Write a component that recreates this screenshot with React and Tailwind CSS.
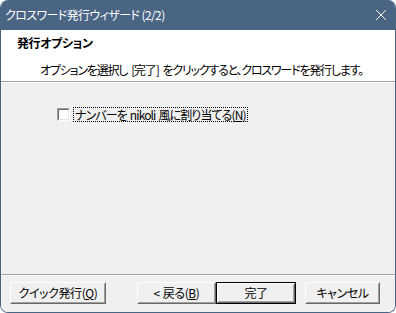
import React from 'react';

const FONT = { fontFamily: '"Noto Sans CJK JP", "Noto Sans", sans-serif' };

function Btn({ children, def, className = '' }) {
  // classic 3D push button; the default one gets a dark outline
  return (
    <div className={`h-[22px] ${def ? 'border border-[#000]' : ''} ${className}`}>
      <div className="h-full border border-t-white border-l-white border-r-[#696969] border-b-[#696969]">
        <div className="h-full border border-t-[#f0f0f0] border-l-[#f0f0f0] border-r-[#a0a0a0] border-b-[#a0a0a0] bg-[#f0f0f0] flex items-center justify-center text-[12px] leading-none text-black whitespace-nowrap">
          {children}
        </div>
      </div>
    </div>
  );
}

export default function App() {
  return (
    <div className="w-[396px] h-[313px] bg-white [font-feature-settings:'palt'] tracking-[-0.4px]" style={FONT}>
      <div className="w-full h-full flex flex-col rounded-t-[8px] rounded-b-[8px] overflow-hidden border border-[#4a6484] border-t-0">
        {/* title bar */}
        <div className="h-[30px] shrink-0 bg-[#4a6484] flex items-center pl-[4px] pr-[9px]">
          <span className="text-white text-[12px] leading-none whitespace-nowrap tracking-[-0.6px]">クロスワード発行ウィザード (2/2)</span>
          <svg viewBox="0 0 10 10" className="ml-auto w-[10px] h-[10px]" stroke="white" strokeWidth="1">
            <path d="M0 0L10 10M10 0L0 10" />
          </svg>
        </div>

        {/* header */}
        <div className="h-[51px] shrink-0 bg-white flex flex-col">
          <div className="pl-[16px] pt-[6px] text-[12px] font-bold leading-[13px] text-black whitespace-nowrap">発行オプション</div>
          <div className="pl-[39px] pt-[14px] text-[12px] leading-[13px] text-black whitespace-nowrap tracking-[-1.2px]">
            オプションを選択し<span className="ml-[4px]">[完了]</span><span className="ml-[4px]">をクリックすると、クロスワードを発行します。</span>
          </div>
        </div>
        <div className="h-px bg-[#a0a0a0] shrink-0" />
        <div className="h-px bg-white shrink-0" />

        {/* body */}
        <div className="flex-1 bg-[#f0f0f0] pt-[24px] pl-[56px]">
          <div className="flex items-center gap-[3px]">
            <div className="w-[13px] h-[13px] border border-t-[#a0a0a0] border-l-[#a0a0a0] border-r-white border-b-white">
              <div className="w-full h-full bg-white border border-t-[#696969] border-l-[#696969] border-r-[#e3e3e3] border-b-[#e3e3e3]" />
            </div>
            <div className="h-[15px] px-[1px] border border-dotted border-black flex items-center text-[12px] leading-none text-black whitespace-nowrap tracking-[-0.9px]">
              ナンバーを<span className="ml-[3px]">nikoli</span><span className="ml-[3px]">風に割り当てる(<span className="underline">N</span>)</span>
            </div>
          </div>
        </div>

        {/* separator */}
        <div className="h-px bg-[#a0a0a0] shrink-0" />
        <div className="h-px bg-white shrink-0" />

        {/* footer buttons */}
        <div className="h-[36px] shrink-0 bg-[#f0f0f0] flex items-start pt-[6px] pl-[9px]">
          <Btn className="w-[96px]">クイック発行(<span className="underline">Q</span>)</Btn>
          <Btn className="w-[79px] ml-[31px]">&lt;<span className="ml-[3px]">戻る(<span className="underline">B</span>)</span></Btn>
          <Btn def className="w-[80px]">完了</Btn>
          <Btn className="w-[75px] ml-[9px]">キャンセル</Btn>
        </div>
      </div>
    </div>
  );
}
